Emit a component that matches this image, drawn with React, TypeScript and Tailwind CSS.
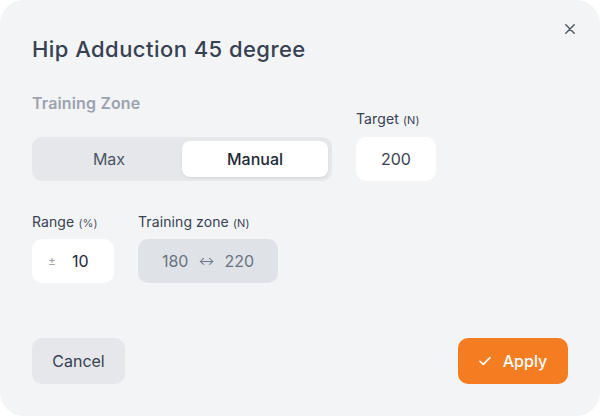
import React from "react";

export default function App() {
  return (
    <div className="w-[600px] h-[416px] bg-white" style={{ fontFamily: "Inter, 'Noto Sans', sans-serif" }}>
      <div className="relative w-full h-full bg-[#f3f4f6] rounded-[24px] flex flex-col px-8 pt-[35px] pb-8">
        <button className="absolute right-[25px] top-[24px] w-[10px] h-[10px] flex items-center justify-center">
          <svg width="10" height="10" viewBox="0 0 10 10" fill="none">
            <path d="M0.8 0.8L9.2 9.2M9.2 0.8L0.8 9.2" stroke="#4b5563" strokeWidth="1.4" strokeLinecap="round" />
          </svg>
        </button>
        <h1 className="text-[22px] leading-[28px] font-medium text-[#374151] tracking-[0.45px]">Hip Adduction 45 degree</h1>

        <div className="flex items-end gap-6 mt-[30px]">
          <div className="flex flex-col">
            <div className="text-[16px] leading-[20px] font-semibold text-[#9ca3af] tracking-[0.15px] mb-[24px]">Training Zone</div>
            <div className="w-[300px] h-[44px] bg-[#e5e7eb] rounded-[10px] p-1 flex">
              <div className="flex-1 flex items-center justify-center text-[16px] text-[#4b5563]">Max</div>
              <div className="flex-1 flex items-center justify-center text-[16px] text-[#1f2937] font-medium bg-white rounded-[8px] shadow-[0_1px_2px_rgba(0,0,0,0.08)]">Manual</div>
            </div>
          </div>
          <div className="flex flex-col">
            <div className="text-[14px] leading-[20px] text-[#374151] tracking-[0.1px] mb-[7px]">
              Target <span className="text-[11px]">(N)</span>
            </div>
            <div className="w-[80px] h-[44px] bg-white rounded-[10px] flex items-center justify-center text-[16px] text-[#374151]">200</div>
          </div>
        </div>

        <div className="flex gap-6 mt-[31px]">
          <div className="flex flex-col">
            <div className="text-[14px] leading-[20px] text-[#374151] tracking-[0.1px] mb-[6px]">
              Range <span className="text-[11px] text-[#4b5563]">(%)</span>
            </div>
            <div className="w-[82px] h-[44px] bg-white rounded-[10px] flex items-center pl-[16px] text-[16px] text-[#1f2937]">
              <span className="text-[12px] text-[#9ca3af] mr-[16px]">±</span>
              <span>10</span>
            </div>
          </div>
          <div className="flex flex-col">
            <div className="text-[14px] leading-[20px] text-[#374151] tracking-[0.1px] mb-[6px]">
              Training zone <span className="text-[11px]">(N)</span>
            </div>
            <div className="w-[140px] h-[44px] bg-[#dfe3e7] rounded-[10px] flex items-center justify-center text-[16px] text-[#6b7280]">
              <span>180</span>
              <span className="text-[12px] mx-[10px]">↔</span>
              <span>220</span>
            </div>
          </div>
        </div>

        <div className="mt-auto flex justify-between items-center">
          <button className="w-[93px] h-[46px] bg-[#e5e7eb] rounded-[10px] text-[16px] text-[#374151]">Cancel</button>
          <button className="w-[110px] h-[46px] bg-[#f47c21] rounded-[10px] text-[16px] text-white font-medium flex items-center justify-center gap-[12px]">
            <svg width="12" height="10" viewBox="0 0 12 10" fill="none">
              <path d="M1 5.2L4.3 8.4L11 1.6" stroke="white" strokeWidth="1.6" strokeLinecap="round" strokeLinejoin="round" />
            </svg>
            <span>Apply</span>
          </button>
        </div>
      </div>
    </div>
  );
}
